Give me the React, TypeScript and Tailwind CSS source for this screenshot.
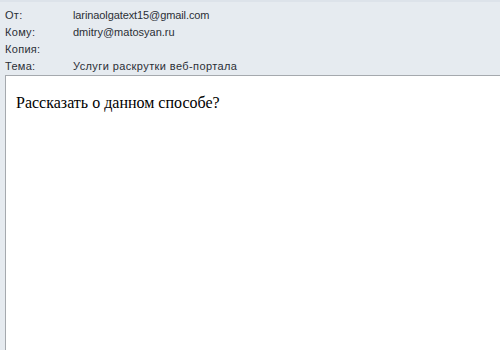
const rows = [
  { label: 'От:', value: 'larinaolgatext15@gmail.com', track: 'tracking-[-0.1px]' },
  { label: 'Кому:', value: 'dmitry@matosyan.ru', track: '' },
  { label: 'Копия:', value: '', track: '' },
  { label: 'Тема:', value: 'Услуги раскрутки веб-портала', track: 'tracking-[0.4px]' },
];

export default function App() {
  return (
    <div className="flex h-[350px] w-[500px] flex-col overflow-hidden bg-[#e6ebf0]">
      {/* header fields */}
      <div className="flex h-[75px] flex-col border-t-2 border-[#dde3ea] pt-[5px] font-['Liberation_Sans',sans-serif] text-[11px] text-[#2b2f36]">
        {rows.map((r) => (
          <div key={r.label} className="flex h-[17px] items-center pl-[5px]">
            <span className="w-[68px] tracking-[0.3px]">{r.label}</span>
            <span className={r.track}>{r.value}</span>
          </div>
        ))}
      </div>
      {/* message body */}
      <div className="ml-[5px] flex-1 border-t border-l border-[#a5a9ae] bg-white px-[10px] pt-[15px] font-['Liberation_Serif',serif] text-[16px] text-black">
        Рассказать о данном способе?
      </div>
    </div>
  );
}
